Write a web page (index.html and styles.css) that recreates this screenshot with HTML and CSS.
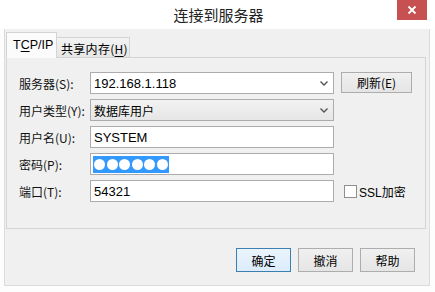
FILE: index.html
```html
<!DOCTYPE html>
<html lang="zh-CN">
<head>
<meta charset="utf-8">
<title>连接到服务器</title>
<link rel="stylesheet" href="styles.css">
</head>
<body>
<div class="window">
  <div class="titlebar">
    <span class="title">连接到服务器</span>
    <div class="close">
      <svg width="10" height="10" viewBox="0 0 10 10"><path d="M1.5 1.5 L8.5 8.5 M8.5 1.5 L1.5 8.5" stroke="#fff" stroke-width="1.8" fill="none"/></svg>
    </div>
  </div>
  <div class="client">
    <div class="tabs">
      <div class="tab active">T<u>C</u>P/IP</div>
      <div class="tab">共享内存(<u>H</u>)</div>
    </div>
    <div class="panel">
      <div class="form">
        <label class="lbl">服务器(S):</label>
        <div class="field combo editable"><span class="val">192.168.1.118</span><svg class="arrow" width="8" height="5" viewBox="0 0 8 5"><path d="M0.5 0.5 L4 4 L7.5 0.5" stroke="#555" stroke-width="1.4" fill="none"/></svg></div>
        <div class="btn refresh">刷新(E)</div>

        <label class="lbl">用户类型(Y):</label>
        <div class="field combo readonly"><span class="val">数据库用户</span><svg class="arrow" width="8" height="5" viewBox="0 0 8 5"><path d="M0.5 0.5 L4 4 L7.5 0.5" stroke="#555" stroke-width="1.4" fill="none"/></svg></div>
        <div></div>

        <label class="lbl">用户名(U):</label>
        <div class="field text"><span class="val">SYSTEM</span></div>
        <div></div>

        <label class="lbl">密码(P):</label>
        <div class="field text"><span class="sel"><i></i><i></i><i></i><i></i><i></i><i></i></span></div>
        <div></div>

        <label class="lbl">端口(T):</label>
        <div class="field text"><span class="val">54321</span></div>
        <div class="check"><span class="box"></span><span>SSL加密</span></div>
      </div>
    </div>
    <div class="buttons">
      <div class="btn default">确定</div>
      <div class="btn">撤消</div>
      <div class="btn">帮助</div>
    </div>
  </div>
</div>
</body>
</html>
```
FILE: styles.css
```css
html, body {
  margin: 0;
  padding: 0;
  background: #ffffff;
}
body {
  font-family: "Liberation Sans", "Noto Sans CJK SC", sans-serif;
  font-size: 12px;
  color: #000;
}
.window {
  width: 435px;
  height: 292px;
  background: #fdfdfd;
}
.titlebar {
  position: relative;
  height: 29px;
  display: flex;
  align-items: center;
  justify-content: center;
  background: #ffffff;
}
.title {
  font-family: "Noto Sans CJK SC", sans-serif;
  font-size: 15px;
  color: #222;
  padding-left: 2px;
  margin-top: -1px;
}
.close {
  position: absolute;
  top: 0;
  left: 397px;
  width: 30px;
  height: 20px;
  background: #c75050;
  display: flex;
  align-items: center;
  justify-content: center;
}
.client {
  margin: 0 5px 0 4px;
  background: #f0f0f0;
  border-left: 1px solid #dcdcdc;
  border-right: 1px solid #dcdcdc;
  border-bottom: 1px solid #dcdcdc;
  padding: 0 3px 0 1px;
  box-sizing: border-box;
  height: 257px;
}
.tabs {
  display: flex;
  align-items: flex-end;
  padding-top: 3px;
  height: 28px;
  box-sizing: border-box;
  position: relative;
  z-index: 1;
}
.tab {
  border: 1px solid #d4d4d4;
  border-bottom: none;
  font-family: "Noto Sans CJK SC", sans-serif;
  font-size: 12px;
  display: flex;
  align-items: center;
  box-sizing: border-box;
  white-space: nowrap;
}
.tab u { text-underline-offset: 2px; }
.tab.active {
  width: 51px;
  height: 26px;
  margin-bottom: -1px;
  background: #fbfbfb;
  padding-left: 6px;
  padding-bottom: 1px;
  font-family: "Liberation Sans", sans-serif;
  font-size: 12.5px;
}
.tab:not(.active) {
  width: 73px;
  height: 20px;
  border-left: none;
  background: linear-gradient(#f3f3f3, #e6e6e6);
  padding-left: 4px;
  padding-top: 1px;
  letter-spacing: 0.3px;
}
.panel {
  border: 1px solid #d4d4d4;
  height: 172px;
  box-sizing: border-box;
  padding: 14px 0 0 12px;
}
.form {
  display: grid;
  grid-template-columns: 64px 244px 71px;
  grid-auto-rows: 22px;
  column-gap: 7px;
  row-gap: 5px;
}
.lbl {
  font-family: "Noto Sans CJK SC", sans-serif;
  font-size: 12px;
  display: flex;
  align-items: center;
  color: #111;
  white-space: nowrap;
}
.field {
  border: 1px solid #acacac;
  background: #fff;
  box-sizing: border-box;
  display: flex;
  align-items: center;
  padding-left: 3px;
  font-family: "Liberation Sans", "Noto Sans CJK SC", sans-serif;
  font-size: 13px;
}
.field.readonly {
  background: linear-gradient(#f2f2f2, #e6e6e6);
  font-family: "Noto Sans CJK SC", sans-serif;
  font-size: 12px;
}
.combo {
  justify-content: space-between;
  padding-right: 5px;
}
.arrow { display: block; }
.sel {
  display: flex;
  align-items: center;
  gap: 1.5px;
  background: #3399ff;
  height: 17px;
  padding: 0 1px;
  margin-left: -1px;
}
.sel i {
  display: block;
  width: 11px;
  height: 11px;
  border-radius: 50%;
  background: #fff;
}
.btn {
  border: 1px solid #adadad;
  background: linear-gradient(#f0f0f0, #e5e5e5);
  box-sizing: border-box;
  display: flex;
  align-items: center;
  justify-content: center;
  font-family: "Noto Sans CJK SC", sans-serif;
  font-size: 12px;
}
.refresh {
  height: 21px;
  align-self: start;
}
.check {
  display: flex;
  align-items: center;
  gap: 2px;
  padding-left: 3px;
  font-family: "Liberation Sans", "Noto Sans CJK SC", sans-serif;
  font-size: 12px;
}
.box {
  width: 13px;
  height: 13px;
  border: 1px solid #8f8f8f;
  background: #fff;
  box-sizing: border-box;
}
.buttons {
  display: flex;
  justify-content: flex-end;
  gap: 7px;
  padding: 19px 11px 0 0;
}
.buttons .btn {
  width: 55px;
  height: 24px;
}
.buttons .btn.default {
  border-color: #3c7fb1;
  background: linear-gradient(#eaf4fc, #dcecfc);
}
```
